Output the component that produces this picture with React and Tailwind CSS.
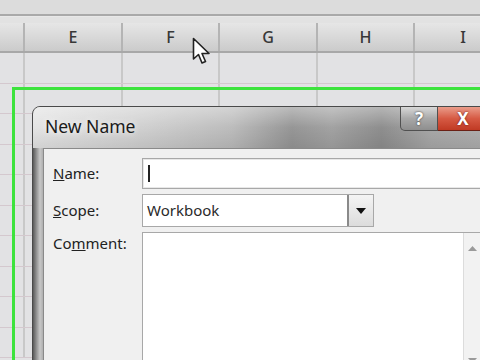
import React from 'react';

const columns = [
  { label: '', width: 'w-[25px]' },
  { label: 'E', width: 'w-[98px]' },
  { label: 'F', width: 'w-[97px]' },
  { label: 'G', width: 'w-[98px]' },
  { label: 'H', width: 'w-[97px]' },
  { label: 'I', width: 'w-[98px]' },
];

const Cursor = () => (
  <svg width="22" height="30" viewBox="0 0 22 30" className="absolute left-[192px] top-[37px]">
    <path d="M1.5 1.5 L1.5 22 L6.5 17.5 L10 26 L13.5 24.5 L10 16.5 L17 16.5 Z" fill="#fff" stroke="#222" strokeWidth="1.6" strokeLinejoin="round" />
  </svg>
);

const App = () => {
  return (
    <div className="relative w-[480px] h-[360px] overflow-hidden bg-[#e2e2e4] font-['Noto_Sans','Open_Sans',sans-serif] text-[#222]">
      {/* ribbon edge */}
      <div className="h-[14px] bg-[#dcdcdc]"></div>
      <div className="h-[3px] bg-[#a9a9a9] border-b border-[#e8e8e8]"></div>
      <div className="h-[6px] bg-[#e2e2e2]"></div>

      {/* column header */}
      <div className="flex h-[30px] border-b-2 border-[#a8a8a8] bg-[linear-gradient(to_bottom,#e6e6e6,#d6d6d6_60%,#cbcbcb)]">
        {columns.map((c, i) => (
          <div
            key={i}
            className={`${c.width} shrink-0 flex items-center justify-center border-r-2 border-[#b4b4b4] text-[16px] font-medium text-[#383838]`}
          >
            {c.label}
          </div>
        ))}
      </div>

      {/* grid */}
      <div className="flex flex-col">
        {Array.from({ length: 10 }).map((_, r) => (
          <div key={r} className="flex h-[30.5px] border-b border-[#d4c8ce]">
            {columns.map((c, i) => (
              <div key={i} className={`${c.width} shrink-0 border-r-2 border-[#c8c8c8]`}></div>
            ))}
          </div>
        ))}
      </div>

      <Cursor />

      {/* selection rectangle */}
      <div className="absolute left-[12px] top-[87px] w-[520px] h-[320px] border-[3px] border-[#3de33d]"></div>

      {/* New Name dialog */}
      <div className="absolute left-[32px] top-[106px] w-[500px] h-[300px] rounded-tl-[8px] border border-[#4a4a4a] bg-[linear-gradient(to_right,#5a5a5a,#9a9a9a_4px,#c8c8c8_7px,#b0b0b0_10px)] overflow-hidden">
        {/* title bar */}
        <div className="relative h-[41px] bg-[linear-gradient(to_right,#e4e4e4_0%,#d2d2d2_20%,#bcbcbc_40%,#969696_52%,#a2a2a2_60%,#8e8e8e_70%,#a8a8a8_80%,#b4b4b4_100%)]">
          <div className="absolute inset-0 bg-[linear-gradient(to_bottom,rgba(255,255,255,0.35),rgba(255,255,255,0)_50%,rgba(0,0,0,0.08))]"></div>
          <div className="relative pl-[12px] pt-[6px] text-[17.5px] text-[#1a1a1a] [text-shadow:0_0_6px_#fff]">New Name</div>
          <div className="absolute left-[367px] top-0 flex">
            <div className="w-[38px] h-[24px] flex items-center justify-center rounded-bl-[5px] border border-t-0 border-[#505050] bg-[linear-gradient(to_bottom,#d8d8d8,#a8a8a8_50%,#8e8e8e)] text-white font-bold text-[17px] [text-shadow:0_0_2px_#222]">
              ?
            </div>
            <div className="w-[50px] h-[24px] flex items-center justify-center border-b border-[#6a2015] bg-[linear-gradient(to_bottom,#ea9c8a,#d65a44_50%,#c03a24)] text-white font-bold text-[17px] [text-shadow:0_0_2px_#5a1008]">
              X
            </div>
          </div>
        </div>

        {/* content panel */}
        <div className="ml-[10px] h-full border-t border-l border-[#8a8a8a] bg-[#f0f0f0] pt-[9px]">
          <div className="flex flex-col gap-[5px] text-[15px]">
            <div className="flex items-center">
              <div className="w-[98px] pl-[9px]"><span className="underline">N</span>ame:</div>
              <div className="flex-1 h-[31px] border border-[#a8a8a8] bg-white shadow-[inset_0_0_0_1px_#e8e8e8] flex items-center pl-[5px]">
                <div className="w-[2px] h-[17px] bg-[#222]"></div>
              </div>
            </div>
            <div className="flex items-center">
              <div className="w-[98px] pl-[9px]"><span className="underline">S</span>cope:</div>
              <div className="w-[232px] h-[33px] flex border border-[#a8a8a8] bg-white">
                <div className="flex-1 flex items-center pl-[4px] text-[15px] text-[#2a2a2a]">Workbook</div>
                <div className="w-[26px] flex items-center justify-center border-l-2 border-[#8a8a8a] bg-[linear-gradient(to_bottom,#f4f4f4,#dcdcdc)]">
                  <svg width="10" height="6" viewBox="0 0 10 6"><path d="M0 0 H10 L5 6 Z" fill="#111" /></svg>
                </div>
              </div>
            </div>
            <div className="flex items-start">
              <div className="w-[98px] pl-[9px]">Co<span className="underline">m</span>ment:</div>
              <div className="flex-1 h-[140px] flex border border-[#a8a8a8] bg-white">
                <div className="w-[320px]"></div>
                <div className="w-[17px] flex flex-col items-center justify-between bg-[#f2f2f2] border-l border-[#dcdcdc] pt-[13px] pb-[8px]">
                  <svg width="9" height="5" viewBox="0 0 9 5"><path d="M0 5 L4.5 0 L9 5 Z" fill="#9a9a9a" /></svg>
                  <svg width="9" height="5" viewBox="0 0 9 5"><path d="M0 0 H9 L4.5 5 Z" fill="#9a9a9a" /></svg>
                </div>
                <div className="flex-1"></div>
              </div>
            </div>
          </div>
        </div>
      </div>
    </div>
  );
};

export default App;
